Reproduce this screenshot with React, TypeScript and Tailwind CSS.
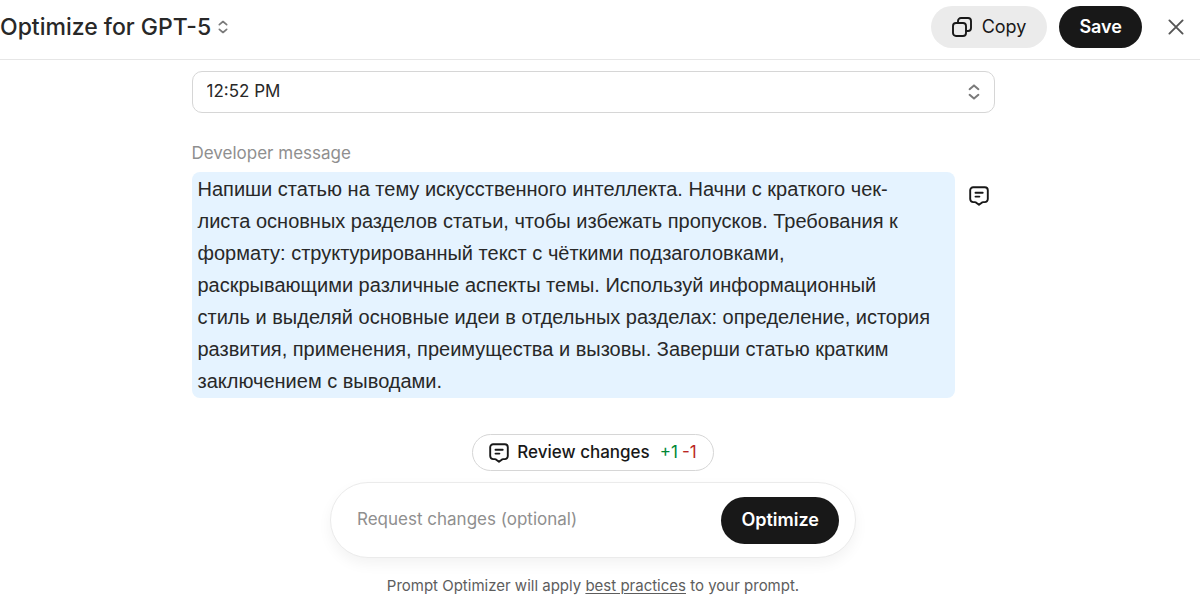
import React from "react";

type IconProps = { className?: string };

function ChevronsIcon({ className }: IconProps) {
  return (
    <svg
      className={className}
      viewBox="0 0 12 16"
      fill="none"
      stroke="currentColor"
      strokeWidth="2"
      strokeLinecap="round"
      strokeLinejoin="round"
      aria-hidden="true"
    >
      <path d="M1.6 5.2 6 1.4l4.400 3.800M1.600 10.800 6 14.600l4.400-3.800" />
    </svg>
  );
}

function CopyIcon({ className }: IconProps) {
  return (
    <svg
      className={className}
      viewBox="0 0 20 20"
      fill="none"
      stroke="currentColor"
      strokeWidth="1.9"
      strokeLinecap="round"
      strokeLinejoin="round"
      aria-hidden="true"
    >
      <rect x="1" y="6" width="13" height="13" rx="3" />
      <path d="M6 5.8V4a3 3 0 0 1 3-3h7a3 3 0 0 1 3 3v7a3 3 0 0 1-3 3h-1.8" />
    </svg>
  );
}

function NoteIcon({ className }: IconProps) {
  return (
    <svg
      className={className}
      viewBox="0 0 20 20"
      fill="none"
      stroke="currentColor"
      strokeWidth="1.9"
      strokeLinecap="round"
      strokeLinejoin="round"
      aria-hidden="true"
    >
      <path d="M4.2 1.2h11.6a3 3 0 0 1 3 3v8.900a3 3 0 0 1-3 3h-1.400a3 3 0 0 0-1.300.3L10 18.700l-3.100-2.300a3 3 0 0 0-1.300-.3H4.200a3 3 0 0 1-3-3V4.200a3 3 0 0 1 3-3Z" />
      <path d="M6.500 6.700h7.200M6.500 10.600h3.900" />
    </svg>
  );
}

function CloseIcon({ className }: IconProps) {
  return (
    <svg
      className={className}
      viewBox="0 0 16 16"
      fill="none"
      stroke="currentColor"
      strokeWidth="1.9"
      strokeLinecap="round"
      aria-hidden="true"
    >
      <path d="M1.4 1.4 14.6 14.6M14.6 1.4 1.4 14.6" />
    </svg>
  );
}

const MESSAGE =
  "Напиши статью на тему искусственного интеллекта. Начни с краткого чек-листа основных разделов статьи, чтобы избежать пропусков. Требования к формату: структурированный текст с чёткими подзаголовками, раскрывающими различные аспекты темы. Используй информационный стиль и выделяй основные идеи в отдельных разделах: определение, история развития, применения, преимущества и вызовы. Заверши статью кратким заключением с выводами.";

function Header() {
  return (
    <header className="flex items-center justify-between border-b border-[#e6e6e6] pt-1.5 pr-4 pb-[11px]">
      <div className="flex items-center gap-1.5">
        <select
          aria-label="Target model"
          className="appearance-none bg-transparent text-[23px] leading-7 font-medium text-[#282828] outline-none"
        >
          <option>Optimize for GPT-5</option>
        </select>
        <ChevronsIcon className="h-3.5 w-2.5 text-[#7a7a7a]" />
      </div>
      <div className="flex items-center gap-3">
        <button
          type="button"
          className="flex h-[42px] items-center gap-2.5 rounded-full bg-[#ebebeb] px-[21px] text-lg text-[#181818]"
        >
          <CopyIcon className="size-5" />
          Copy
        </button>
        <button
          type="button"
          className="h-[42px] rounded-full bg-[#181818] px-5 text-lg font-semibold text-white"
        >
          Save
        </button>
        <button type="button" aria-label="Close" className="ml-3.5 text-[#555]">
          <CloseIcon className="size-4" />
        </button>
      </div>
    </header>
  );
}

export default function App() {
  return (
    <div className="min-h-screen bg-white font-['Inter','Liberation_Sans',sans-serif] text-[#282828]">
      <Header />
      <main className="flex flex-col items-center pt-[11px] pr-3.5">
        <div className="w-full max-w-[803px]">
          <div className="grid items-center">
            <select
              aria-label="Version"
              className="col-start-1 row-start-1 h-[42px] w-full appearance-none rounded-[10px] border border-[#d6d6d6] bg-white px-3.5 text-[17px] outline-none"
            >
              <option>12:52 PM</option>
            </select>
            <ChevronsIcon className="pointer-events-none col-start-1 row-start-1 mr-[15px] h-4 w-3 justify-self-end text-[#7a7a7a]" />
          </div>

          <section className="mt-[26px]">
            <h2 className="text-[17px] leading-7 text-[#8f8f8f]">Developer message</h2>
            <div className="mt-[5px] flex items-start gap-3.5">
              <p className="max-w-[763px] flex-1 rounded-lg bg-[#e5f3ff] py-px pr-6 pl-1.5 font-['Liberation_Sans',Arial,sans-serif] text-xl leading-8">
                {MESSAGE}
              </p>
              <button type="button" aria-label="Show comment" className="mt-3.5 text-[#181818]">
                <NoteIcon className="size-5" />
              </button>
            </div>
          </section>
        </div>

        <button
          type="button"
          className="mt-9 flex h-[37px] items-center rounded-full border border-[#d6d6d6] bg-white px-4 text-[17px] font-medium text-[#181818]"
        >
          <NoteIcon className="mr-2 size-5" />
          Review changes
          <span className="ml-2.5 font-normal text-[#008635]">+1</span>
          <span className="ml-1 font-normal text-[#ba2623]">-1</span>
        </button>

        <form
          onSubmit={(event: React.FormEvent) => event.preventDefault()}
          className="mt-[11px] flex h-[76px] w-full max-w-[526px] items-center rounded-full border border-[#ebebeb] bg-white pr-4 pl-[26px] shadow-[0_6px_14px_rgba(0,0,0,0.05)]"
        >
          <input
            type="text"
            aria-label="Request changes"
            placeholder="Request changes (optional)"
            className="min-w-0 flex-1 bg-transparent text-[17px] outline-none placeholder:text-[#8f8f8f]"
          />
          <button
            type="submit"
            className="h-[47px] rounded-full bg-[#181818] px-5 text-lg font-semibold text-white"
          >
            Optimize
          </button>
        </form>

        <p className="mt-4 text-[15px] leading-6 text-[#5d5d5d]">
          Prompt Optimizer will apply{" "}
          <a href="#best-practices" className="underline underline-offset-2">
            best practices
          </a>{" "}
          to your prompt.
        </p>
      </main>
    </div>
  );
}
